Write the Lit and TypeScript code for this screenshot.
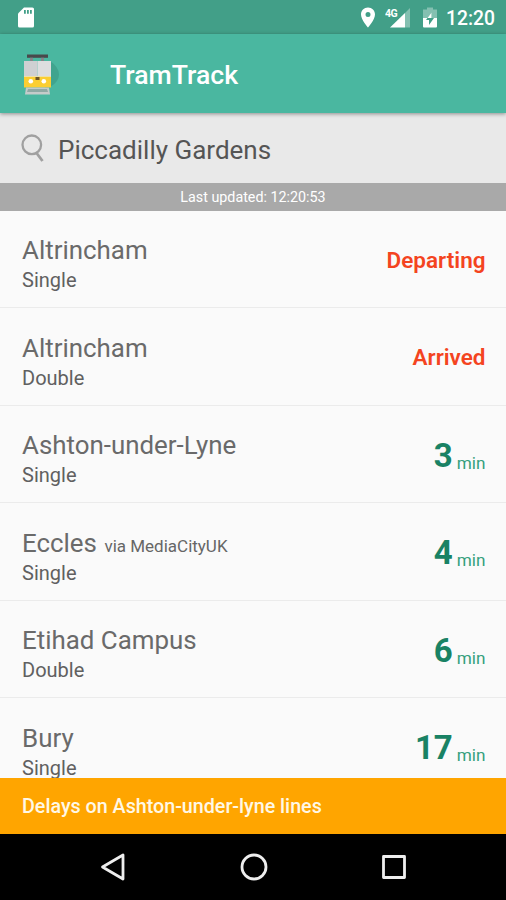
import { LitElement, html, css, svg, nothing } from "lit";
import { customElement } from "lit/decorators.js";

interface Tram {
  stop: string;
  via?: string;
  cars: string;
  status?: string;
  mins?: number;
}

const TRAMS: Tram[] = [
  { stop: "Altrincham", cars: "Single", status: "Departing" },
  { stop: "Altrincham", cars: "Double", status: "Arrived" },
  { stop: "Ashton-under-Lyne", cars: "Single", mins: 3 },
  { stop: "Eccles", via: "via MediaCityUK", cars: "Single", mins: 4 },
  { stop: "Etihad Campus", cars: "Double", mins: 6 },
  { stop: "Bury", cars: "Single", mins: 17 },
];

@customElement("status-bar")
class StatusBar extends LitElement {
  static styles = css`
    :host { display: flex; height: 34px; background: #429f88; color: #fff; align-items: center; padding: 0 11px 0 17px; box-sizing: border-box; }
    svg { display: block; flex: none; }
    .gap { flex: 1; }
    .pin { margin-right: 9px; }
    .signal { margin-right: 11px; }
    .battery { margin-right: 8.5px; }
    .net { font: 700 10.5px Roboto, sans-serif; letter-spacing: -0.6px; }
    .time { font: 500 19.3px/34px Roboto, sans-serif; padding-top: 3px; }
  `;
  render() {
    return html`
      <svg width="18" height="22" viewBox="0 0 18 22">
        <path fill="#fff" d="M7 1.5H15.4Q17 1.5 17 3V20Q17 21.5 15.4 21.5H2.6Q1 21.5 1 20V7.5Z" />
        <path fill="#429f88" d="M7 4h1.8v3.8H7zM10 4h1.8v3.8H10zM13 4h1.8v3.8H13z" />
      </svg>
      <span class="gap"></span>
      <svg class="pin" width="16" height="22" viewBox="0 0 16 22">
        <path fill="#fff" fill-rule="evenodd" d="M8 1.5C4 1.5 1 4.6 1 8.4C1 13.5 8 21.5 8 21.5S15 13.5 15 8.4C15 4.6 12 1.5 8 1.5ZM8 5.9a2.5 2.5 0 1 1 0 5a2.5 2.5 0 0 1 0-5Z" />
      </svg>
      <svg class="signal" width="26" height="22" viewBox="0 0 26 22">
        <path fill="#fff" fill-opacity=".35" d="M25 2V21.5H20V7Z" />
        <path fill="#fff" d="M20 7V21.5H5Z" />
        <text class="net" x="0" y="10.5" fill="#fff">4G</text>
      </svg>
      <svg class="battery" width="16" height="22" viewBox="0 0 16 22">
        <path fill="#fff" fill-opacity=".35" d="M5 1.5h6v2h4V12H1V3.500h4z" />
        <path fill="#fff" d="M1 12h14v8.500q0 1-1 1H2q-1 0-1-1z" />
        <path fill="#429f88" d="M4 14 9.500 6.500V12H12L7 19V14z" />
        <path fill="#fff" d="M9.500 6.500V12H5.500z" />
      </svg>
      <span class="time">12:20</span>
    `;
  }
}

@customElement("app-header")
class AppHeader extends LitElement {
  static styles = css`
    :host { display: flex; height: 79px; background: #4ab7a0; align-items: center; padding-left: 20px; box-sizing: border-box; box-shadow: 0 1px 4px rgba(0,0,0,.4); position: relative; z-index: 1; }
    .title { font: 500 26.6px/34px Roboto, sans-serif; color: #fff; margin-left: 46px; padding-top: 3px; }
  `;
  render() {
    return html`
      <svg width="44" height="44" viewBox="0 0 44 44">
        <path fill="#40a48e" d="M30 9Q39 15 39 22.500T30 35L25 38V12Z" />
        <path fill="#49494b" d="M7 2.500h21v3.300H7z" />
        <path fill="#858589" d="M10 5.800h3V9h-3zM21 5.800h3V9h-3z" />
        <path fill="#cfd0d2" d="M4 9H17.500V24H4z" />
        <path fill="#dededf" d="M17.500 9H31V24H17.500z" />
        <path fill="#fbce32" d="M4 24H31V35.500H4z" />
        <path fill="#e9e9dc" d="M4 24H31V24.700H4z" />
        <path fill="#6c5526" d="M15.500 25h4v3h-4z" />
        <circle cx="10.800" cy="29.300" r="2.300" fill="#fff" />
        <circle cx="23.800" cy="29.300" r="2.300" fill="#fff" />
        <path fill="#c5cbca" d="M6 35.500H29L30 42.500H5Z" />
        <path fill="#8fa9a4" d="M8 37H27L28 40H7z" />
      </svg>
      <span class="title">TramTrack</span>
    `;
  }
}

@customElement("tram-row")
class TramRow extends LitElement {
  static properties = { tram: { attribute: false } };
  declare tram: Tram;
  static styles = css`
    :host { display: flex; height: 97.500px; flex: none; box-sizing: border-box; justify-content: space-between; align-items: center; padding: 0 20.500px 0 22px; border-bottom: 1px solid #ebebeb; font-family: Roboto, sans-serif; }
    .place { padding-top: 11px; }
    .stop { font-size: 25.900px; line-height: 32px; color: #6a6a6a; }
    .via { font-size: 17px; line-height: 1; color: #666; margin-left: 1px; }
    .cars { font-size: 20px; line-height: 28px; color: #606060; }
    .status { font-size: 22.500px; font-weight: 600; color: #f4441f; padding-top: 2px; }
    .eta { color: #35a07e; font-size: 17.200px; line-height: 42px; padding-top: 9px; display: flex; align-items: baseline; gap: 4px; }
    .mins { font-size: 33px; font-weight: 700; color: #198264; }
    .unit { position: relative; top: 2px; }
  `;
  render() {
    const t = this.tram;
    return html`
      <div class="place">
        <div class="stop">${t.stop}${t.via ? html` <span class="via">${t.via}</span>` : nothing}</div>
        <div class="cars">${t.cars}</div>
      </div>
      ${t.status
        ? html`<div class="status">${t.status}</div>`
        : html`<div class="eta"><span class="mins">${t.mins}</span><span class="unit">min</span></div>`}
    `;
  }
}

@customElement("app-root")
class AppRoot extends LitElement {
  static styles = css`
    :host { display: flex; flex-direction: column; width: 506px; height: 900px; overflow: hidden; background: #fafafa; font-family: Roboto, sans-serif; }
    status-bar, app-header, .search, .updated, .notice, .nav { flex: none; }
    .search { height: 70px; background: #e9e9e9; display: flex; align-items: center; padding-left: 20px; box-sizing: border-box; }
    .query { font-size: 26px; line-height: 34px; color: #555; margin-left: 12px; padding-top: 4px; }
    .updated { height: 27.500px; background: #a9a9a9; color: #fff; font-size: 14.300px; line-height: 29px; text-align: center; }
    .list { flex: 1; min-height: 0; overflow: hidden; display: flex; flex-direction: column; }
    .notice { height: 55.500px; background: #ffa500; color: #fff8e6; font-size: 19.700px; font-weight: 500; line-height: 58px; padding-left: 22px; box-sizing: border-box; }
    .nav { height: 66.500px; background: #000; display: flex; justify-content: center; align-items: center; gap: 110.500px; padding-left: 1px; box-sizing: border-box; }
  `;
  render() {
    return html`
      <status-bar></status-bar>
      <app-header></app-header>
      <div class="search">
        <svg width="26" height="30" viewBox="0 0 26 30" fill="none" stroke="#a0a0a0" stroke-width="2.300">
          <circle cx="11.800" cy="11.800" r="9.300" />
          <path stroke-width="2.800" d="M16.500 20 22.500 28" />
        </svg>
        <span class="query">Piccadilly Gardens</span>
      </div>
      <div class="updated">Last updated: 12:20:53</div>
      <div class="list">${TRAMS.map((t) => html`<tram-row .tram=${t}></tram-row>`)}</div>
      <div class="notice">Delays on Ashton-under-lyne lines</div>
      <div class="nav">
        ${["back", "home", "recent"].map(
          (k) => html`<svg width="30" height="30" viewBox="0 0 30 30" fill="none" stroke="#eee" stroke-width="2.800" stroke-linejoin="round">
            ${k === "back" ? svg`<path d="M25 3V27L4.500 15Z" />` : k === "home" ? svg`<circle cx="15" cy="15" r="12" />` : svg`<rect x="4.500" y="4.500" width="21" height="21" />`}
          </svg>`
        )}
      </div>
    `;
  }
}
